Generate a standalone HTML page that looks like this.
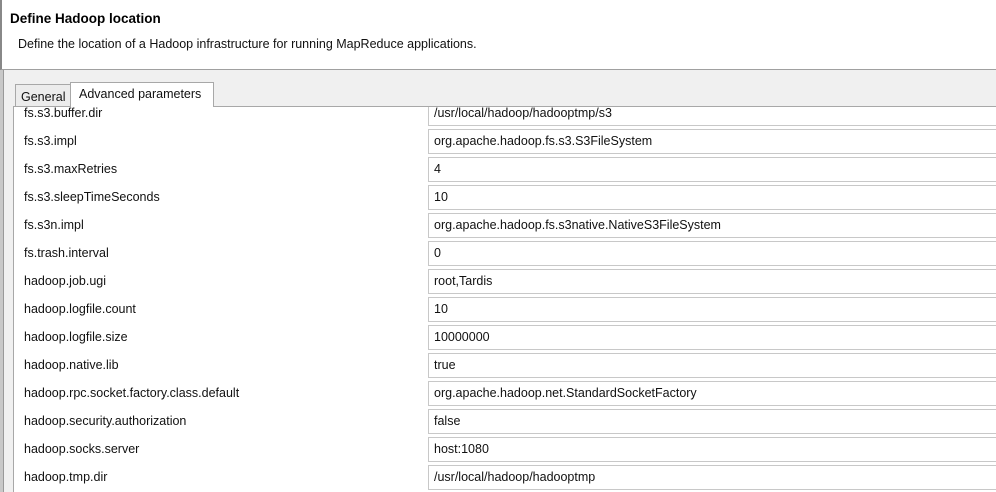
<!DOCTYPE html><html><head><style>
html,body{margin:0;width:996px;height:492px;overflow:hidden}
body{background:#f0f0f0;font-family:"Liberation Sans",sans-serif;position:relative}
.hdr{position:absolute;left:0;top:0;width:996px;height:70px;background:#fff;border-bottom:1px solid #a0a0a0;border-left:2px solid #888;box-sizing:border-box}
.t1{position:absolute;left:8px;top:11px;font-size:13.5px;font-weight:bold;color:#000}
.t2{position:absolute;left:16px;top:37px;font-size:12.5px;color:#111}
.lb{position:absolute;left:0;top:70px;width:3px;height:422px;background:#c8c8c8;border-right:1px solid #999}
.tab{position:absolute;font-size:12.5px;color:#111;box-sizing:border-box;border:1px solid #a8a8a8;border-bottom:none}
.panel{position:absolute;left:13px;top:106px;width:990px;height:400px;background:#fff;border:1px solid #a8a8a8;overflow:hidden}
.lab{position:absolute;left:10px;font-size:12.5px;color:#111}
.fld{position:absolute;left:414px;width:600px;height:25px;border:1px solid #c8c8c8;box-sizing:border-box;background:#fff;font-size:12.5px;color:#111;padding-left:5px;line-height:23px}
</style></head><body>
<div class="hdr"><div class="t1">Define Hadoop location</div><div class="t2">Define the location of a Hadoop infrastructure for running MapReduce applications.</div></div>
<div class="lb"></div>
<div class="panel" id="rows"></div>
<div class="tab" style="left:15px;top:84px;width:56px;height:22px;background:#ececec;padding:5px 0 0 5px">General</div>
<div class="tab" style="left:70px;top:82px;width:144px;height:25px;background:#fff;padding:4px 0 0 8px">Advanced parameters</div>
<script>
var d=[["fs.s3.buffer.dir","/usr/local/hadoop/hadooptmp/s3"],["fs.s3.impl","org.apache.hadoop.fs.s3.S3FileSystem"],["fs.s3.maxRetries","4"],["fs.s3.sleepTimeSeconds","10"],["fs.s3n.impl","org.apache.hadoop.fs.s3native.NativeS3FileSystem"],["fs.trash.interval","0"],["hadoop.job.ugi","root,Tardis"],["hadoop.logfile.count","10"],["hadoop.logfile.size","10000000"],["hadoop.native.lib","true"],["hadoop.rpc.socket.factory.class.default","org.apache.hadoop.net.StandardSocketFactory"],["hadoop.security.authorization","false"],["hadoop.socks.server","host:1080"],["hadoop.tmp.dir","/usr/local/hadoop/hadooptmp"]];
var h="";d.forEach(function(r,i){var c=113+28*i-107;h+='<div class="fld" style="top:'+(c-12)+'px">'+r[1]+'</div><div class="lab" style="top:'+(c-7)+'px">'+r[0]+'</div>';});
document.getElementById("rows").innerHTML=h;
</script>
</body></html>
